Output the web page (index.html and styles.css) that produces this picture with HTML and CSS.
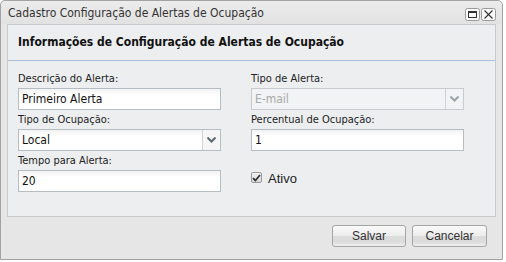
FILE: index.html
```html
<!DOCTYPE html>
<html>
<head>
<meta charset="utf-8">
<link rel="stylesheet" href="styles.css">
</head>
<body>
<div class="window">
  <div class="titlebar">
    <span class="title">Cadastro Configuração de Alertas de Ocupação</span>
    <div class="tools">
      <span class="tool"><svg width="15" height="13" viewBox="0 0 15 13"><rect x="0.5" y="0.5" width="14" height="12" rx="2" fill="#fafafa" stroke="#9a9a9a"/><rect x="3.5" y="3.5" width="8" height="6" fill="none" stroke="#333"/><line x1="3.5" y1="4.5" x2="11.5" y2="4.5" stroke="#333"/></svg></span>
      <span class="tool"><svg width="15" height="13" viewBox="0 0 15 13"><rect x="0.5" y="0.5" width="14" height="12" rx="2" fill="#fafafa" stroke="#9a9a9a"/><path d="M3.5 2.5 L11.5 10.5 M11.5 2.5 L3.5 10.5" stroke="#333" stroke-width="1.1"/></svg></span>
    </div>
  </div>
  <div class="panel">
    <div class="panel-head">Informações de Configuração de Alertas de Ocupação</div>
    <div class="form">
      <div class="field">
        <label>Descrição do Alerta:</label>
        <div class="input">Primeiro Alerta</div>
      </div>
      <div class="field right">
        <label>Tipo de Alerta:</label>
        <div class="select disabled"><span class="val">E-mail</span><span class="btn"><svg width="9" height="6" viewBox="0 0 9 6"><path d="M0.5 0.5 L4.5 4.5 L8.5 0.5" fill="none" stroke="#9aa3a8" stroke-width="2"/></svg></span></div>
      </div>
      <div class="field">
        <label>Tipo de Ocupação:</label>
        <div class="select"><span class="val">Local</span><span class="btn"><svg width="9" height="6" viewBox="0 0 9 6"><path d="M0.5 0.5 L4.5 4.5 L8.5 0.5" fill="none" stroke="#5a6a72" stroke-width="2"/></svg></span></div>
      </div>
      <div class="field right">
        <label>Percentual de Ocupação:</label>
        <div class="input">1</div>
      </div>
      <div class="field">
        <label>Tempo para Alerta:</label>
        <div class="input">20</div>
      </div>
      <div class="field right check-field">
        <span class="checkbox"><svg width="9" height="8" viewBox="0 0 9 8"><path d="M1 4.2 L3.4 6.5 L8 1" fill="none" stroke="#333" stroke-width="1.8"/></svg></span>
        <span class="check-label">Ativo</span>
      </div>
    </div>
  </div>
  <div class="footer">
    <button class="button">Salvar</button>
    <button class="button">Cancelar</button>
  </div>
</div>
</body>
</html>
```

FILE: styles.css
```css
html, body {
  margin: 0;
  padding: 0;
  background: #ffffff;
}
.window {
  box-sizing: border-box;
  width: 503px;
  height: 260px;
  border: 1px solid #a3a3a3;
  border-radius: 5px 5px 0 0;
  background: #e6e6e6;
  font-family: "DejaVu Sans Condensed", "DejaVu Sans", sans-serif;
  color: #222;
  display: flex;
  flex-direction: column;
}
.titlebar {
  height: 23px;
  display: flex;
  align-items: center;
  padding: 0 6px 0 7px;
  background: linear-gradient(#ececec, #e2e2e2);
  border-radius: 5px 5px 0 0;
}
.title {
  font-size: 12px;
  color: #333;
  flex: 1;
}
.tools {
  display: flex;
  gap: 1px;
  margin-top: 3px;
}
.tool {
  display: block;
  width: 15px;
  height: 13px;
}
.tool svg { display: block; }
.panel {
  margin: 0 6px;
  height: 193px;
  box-sizing: border-box;
  border: 1px solid #c8cbce;
  background: #eceef0;
}
.panel-head {
  height: 36px;
  box-sizing: border-box;
  border-bottom: 1px solid #a7c1dc;
  padding: 0 0 1px 10px;
  display: flex;
  align-items: center;
  font-weight: bold;
  font-size: 12px;
  color: #111;
}
.form {
  display: grid;
  grid-template-columns: 203px 213px;
  column-gap: 30px;
  padding: 11px 0 0 10px;
  row-gap: 0;
}
.field {
  display: flex;
  flex-direction: column;
  height: 41px;
}
label {
  font-size: 11px;
  line-height: 14px;
  height: 16px;
  color: #222;
}
.input, .select {
  box-sizing: border-box;
  height: 22px;
  border: 1px solid #b5bcc2;
  background: linear-gradient(#f2f2f2, #ffffff 6px);
  font-size: 12px;
  line-height: 20px;
  padding-left: 3px;
  color: #111;
}
.select {
  display: flex;
  padding-left: 0;
}
.select .val {
  flex: 1;
  padding-left: 3px;
}
.select .btn {
  width: 17px;
  border-left: 1px solid #cfd4d8;
  display: flex;
  align-items: center;
  justify-content: center;
  background: #f6f6f6;
}
.select .btn svg { display: block; }
.select.disabled {
  color: #a8a8a8;
  border-color: #c6cbcf;
  background: #f1f3f4;
}
.select.disabled .btn {
  background: #f1f3f4;
}
.check-field {
  flex-direction: row;
  align-items: center;
  box-sizing: border-box;
  height: 41px;
  padding-top: 17px;
  padding-bottom: 11px;
  gap: 6px;
}
.checkbox {
  box-sizing: border-box;
  width: 11px;
  height: 11px;
  border: 1px solid #9a9a9a;
  border-radius: 2px;
  background: linear-gradient(#f2f2f2, #d9d9d9);
  display: flex;
  align-items: center;
  justify-content: center;
}
.checkbox svg { display: block; }
.check-label {
  font-family: "Liberation Sans", Arial, sans-serif;
  font-size: 13px;
  color: #222;
  margin-top: 2px;
}
.footer {
  flex: 1;
  display: flex;
  justify-content: flex-end;
  align-items: flex-start;
  gap: 6px;
  padding: 8px 15px 0 0;
}
.button {
  box-sizing: border-box;
  height: 22px;
  border: 1px solid #a5a5a5;
  border-radius: 3px;
  background: linear-gradient(#fafafa 0, #ececec 50%, #dcdcdc 52%, #dcdcdc 80%, #f0f0f0 100%);
  font-family: "Liberation Sans", Arial, sans-serif;
  font-size: 12px;
  color: #333;
  padding: 0;
}
.button:first-child { width: 74px; }
.button:last-child { width: 75px; }
```
